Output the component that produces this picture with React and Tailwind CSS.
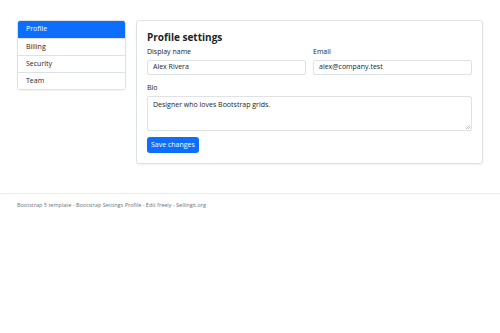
import { useState } from 'react';

const NAV = ['Profile', 'Billing', 'Security', 'Team'];

export default function App() {
  const [active, setActive] = useState('Profile');

  return (
    <div className="min-h-[333px] bg-white text-[#212529]" style={{ fontFamily: '"Open Sans", "Noto Sans", sans-serif' }}>
      <div className="px-[17px] pt-[20px]">
        <div className="grid grid-cols-[109px_1fr] gap-[10px]">
          {/* Sidebar list */}
          <div className="self-start overflow-hidden rounded-[3px] border border-[#dee2e6] shadow-[0_1px_2px_rgba(0,0,0,0.06)]">
            {NAV.map((label, i) => (
              <button
                key={label}
                type="button"
                onClick={() => setActive(label)}
                className={`flex h-[17px] w-full items-center px-[8px] text-left text-[7px] ${
                  i > 0 ? 'border-t border-[#dee2e6]' : ''
                } ${active === label ? 'bg-[#0d6efd] text-white' : 'bg-white text-[#212529]'}`}
              >
                {label}
              </button>
            ))}
          </div>

          {/* Card */}
          <div className="rounded-[3px] border border-[#dee2e6] bg-white px-[10px] pb-[10px] pt-[9px] shadow-[0_1px_2px_rgba(0,0,0,0.06)]">
            <h2 className="text-[10px] font-bold leading-[14px]">Profile settings</h2>
            <div className="mt-[3px] grid grid-cols-2 gap-[7px]">
              <div>
                <div className="text-[7px] leading-[10px]">Display name</div>
                <div className="mt-[3px] flex h-[15px] items-center rounded-[2px] border border-[#dee2e6] px-[5px] text-[7px]">
                  Alex Rivera
                </div>
              </div>
              <div>
                <div className="text-[7px] leading-[10px]">Email</div>
                <div className="mt-[3px] flex h-[15px] items-center rounded-[2px] border border-[#dee2e6] px-[5px] text-[7px]">
                  alex@company.test
                </div>
              </div>
            </div>
            <div className="mt-[8px] text-[7px] leading-[10px]">Bio</div>
            <div className="relative mt-[3px] h-[35px] rounded-[2px] border border-[#dee2e6] px-[5px] pt-[3px] text-[7px]">
              Designer who loves Bootstrap grids.
              <svg className="absolute bottom-[1px] right-[1px]" width="4" height="4" viewBox="0 0 4 4">
                <path d="M4 0L0 4M4 2L2 4" stroke="#999" strokeWidth="0.6" />
              </svg>
            </div>
            <button
              type="button"
              className="mt-[6px] flex h-[16px] items-center rounded-[3px] bg-[#0d6efd] px-[4px] text-[7px] text-white"
            >
              Save changes
            </button>
          </div>
        </div>
      </div>

      <footer className="mt-[29px] border-t border-[#e9ecef] px-[17px] pt-[7px] text-[5.5px] text-[#6c757d]">
        Bootstrap 5 template - Bootstrap Settings Profile - Edit freely - Sellingit.org
      </footer>
    </div>
  );
}
